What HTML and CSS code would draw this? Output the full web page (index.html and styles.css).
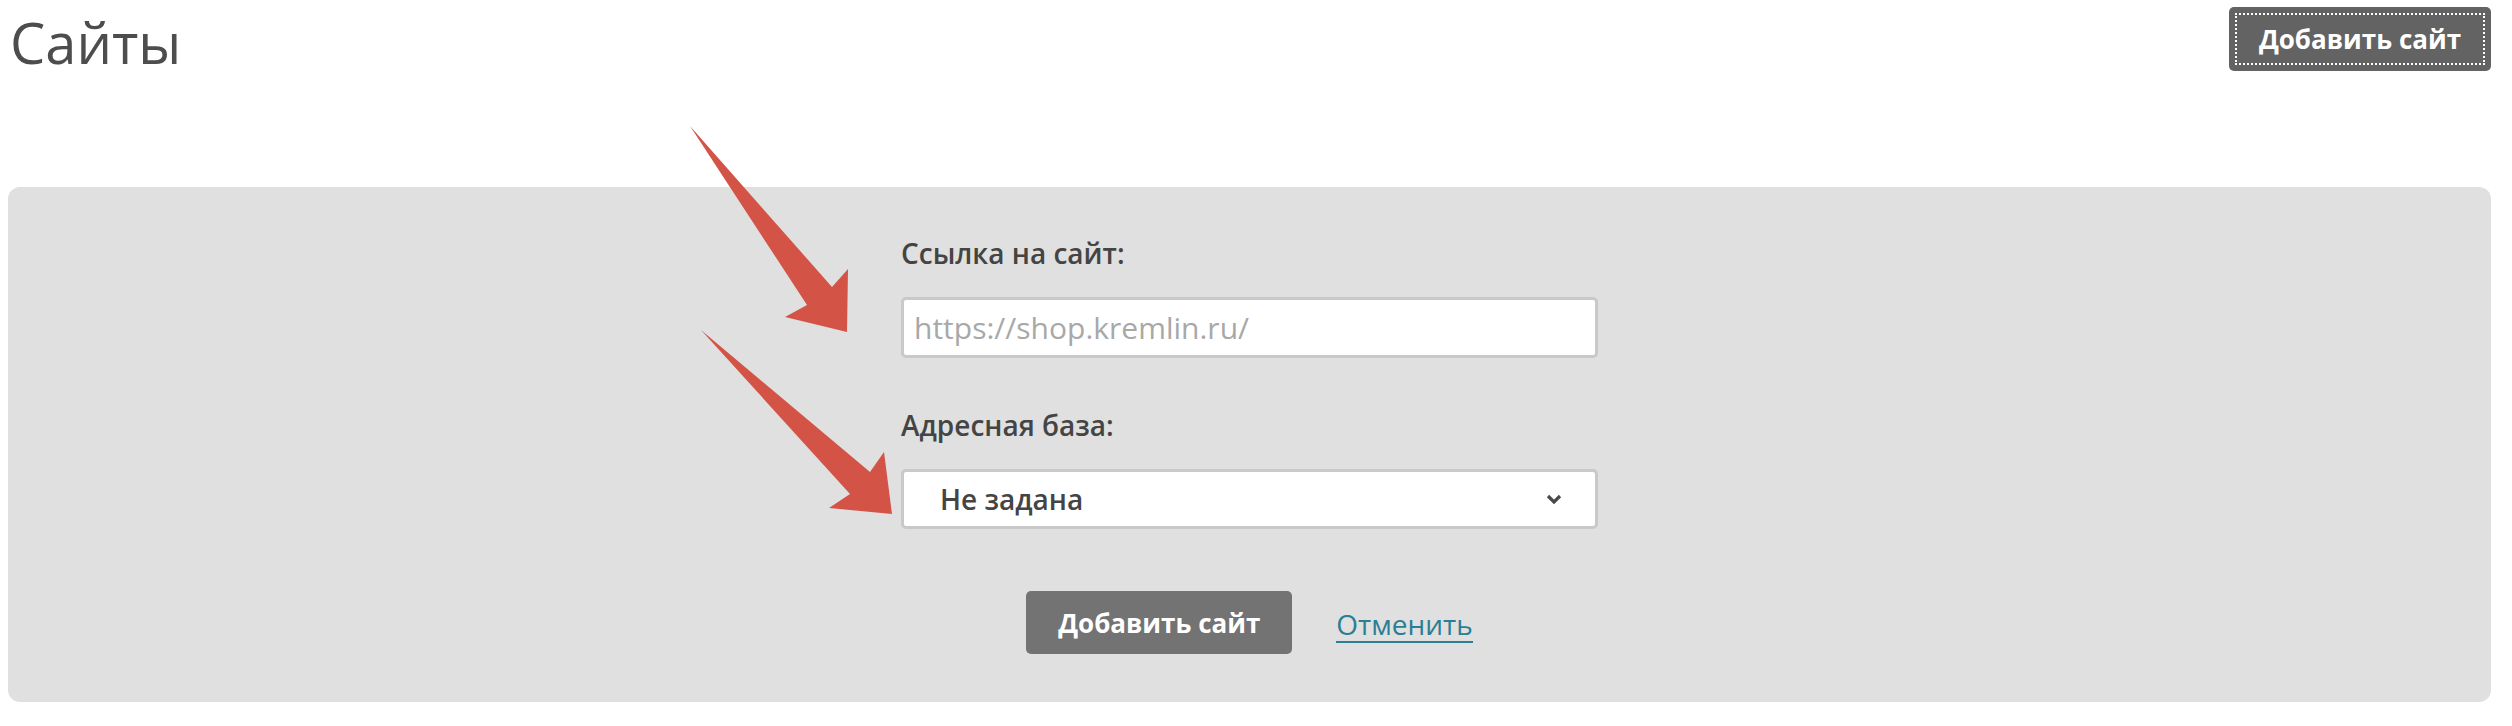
FILE: index.html
```html
<!DOCTYPE html>
<html lang="ru">
<head>
  <meta charset="utf-8">
  <title>Сайты</title>
  <link rel="stylesheet" href="styles.css">
</head>
<body>

<div class="page">
  <div class="header">
    <h1 class="title">Сайты</h1>
    <button class="btn btn-top" type="button">Добавить сайт</button>
  </div>

  <div class="panel">
    <form class="site-form">
      <label class="field-label" for="site-url">Ссылка на сайт:</label>
      <input class="field field-input" id="site-url" type="text" placeholder="https://shop.kremlin.ru/">

      <label class="field-label label-base" for="site-base">Адресная база:</label>
      <div class="field field-select" id="site-base">
        <span>Не задана</span>
        <svg class="chevron" width="16" height="10" viewBox="0 0 16 10">
          <polyline points="2,2 8,8 14,2" fill="none" stroke="#4a4a4a" stroke-width="3.2"/>
        </svg>
      </div>
    </form>

    <div class="actions">
      <button class="btn btn-submit" type="button">Добавить сайт</button>
      <a class="cancel" href="#">Отменить</a>
    </div>
  </div>
</div>

<!-- pointers to the two fields -->
<svg class="arrows" width="2512" height="726" viewBox="0 0 2512 726">
  <polygon points="690,126 832,287 848,269 847,332 785,317 807,305" fill="#d35446"/>
  <polygon points="701,330 870,472 884,452 892,514 829,508 850,494" fill="#d35446"/>
</svg>

</body>
</html>
```

FILE: styles.css
```css
html {
  height: 100%;
}
body {
  margin: 0;
  padding: 0;
  background: #ffffff;
  color: #4a4a4a;
  font-family: "Open Sans", "Noto Sans", sans-serif;
  position: relative;
}

.page {
  padding: 0 21px 0 8px;
}

.header {
  display: flex;
  justify-content: space-between;
  align-items: flex-start;
  height: 187px;
  padding-top: 7px;
  box-sizing: border-box;
}

.title {
  margin: 7px 0 0 2px;
  font-size: 56px;
  font-weight: 400;
  line-height: 56px;
  color: #4d4d4d;
}

.btn {
  border: 0;
  border-radius: 5px;
  color: #ffffff;
  font-family: "Open Sans", "Noto Sans", sans-serif;
  font-size: 26px;
  font-weight: 700;
  cursor: pointer;
}

.btn-top {
  width: 262px;
  height: 64px;
  background: #636363;
  outline: 2px dotted #ffffff;
  outline-offset: -8px;
}

.panel {
  background: #e0e0e0;
  border-radius: 12px;
  padding: 47px 0 48px;
}

.site-form {
  width: 697px;
  margin: 0 auto;
  display: flex;
  flex-direction: column;
  align-items: stretch;
}

.field-label {
  font-size: 28px;
  font-weight: 600;
  line-height: 38px;
  color: #444444;
}

.label-base {
  margin-top: 48px;
}

.field {
  box-sizing: border-box;
  border: 3px solid #c9c9c9;
  border-radius: 5px;
  background: #ffffff;
  font-family: "Open Sans", "Noto Sans", sans-serif;
}

.field-input {
  margin-top: 25px;
  height: 61px;
  padding: 0 10px;
  font-size: 30px;
  color: #444444;
}
.field-input::placeholder {
  color: #a8a8a8;
}

.field-select {
  margin-top: 25px;
  height: 60px;
  padding: 0 33px 0 36px;
  display: flex;
  align-items: center;
  justify-content: space-between;
  font-size: 28px;
  font-weight: 600;
  color: #444444;
}

.actions {
  display: flex;
  justify-content: center;
  align-items: center;
  gap: 44px;
  margin-top: 62px;
}

.btn-submit {
  width: 266px;
  height: 63px;
  background: #737373;
}

.cancel {
  color: #2b7f95;
  font-size: 28px;
  text-decoration: none;
  border-bottom: 2px solid #2b7f95;
  line-height: 34px;
  margin-top: 4px;
}

.arrows {
  position: absolute;
  top: 0;
  left: 0;
  pointer-events: none;
}
```
